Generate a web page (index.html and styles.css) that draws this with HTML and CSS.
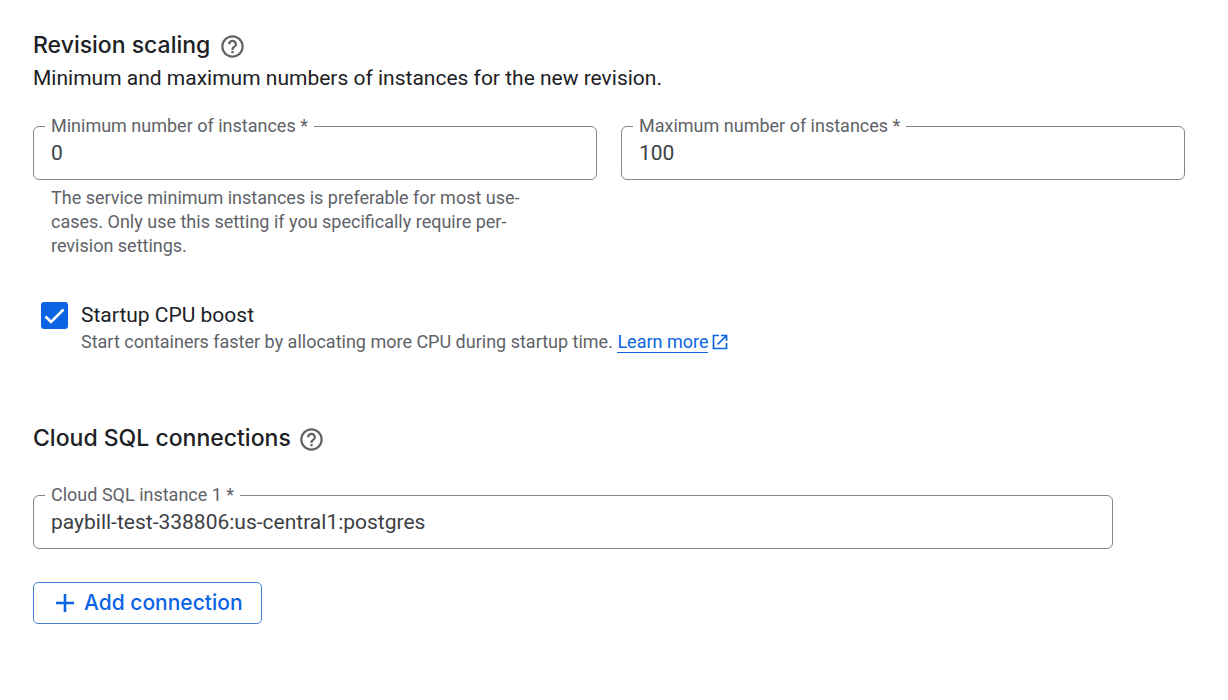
FILE: index.html
```html
<!DOCTYPE html>
<html lang="en">
<head>
<meta charset="utf-8">
<meta name="viewport" content="width=device-width, initial-scale=1">
<title>Revision settings</title>
<link rel="stylesheet" href="styles.css">
</head>
<body>
<form class="page">
  <section class="scaling">
    <div class="heading heading-wide">
      <h2 class="title">Revision scaling</h2>
      <button class="help" type="button" aria-label="Help for revision scaling">
        <svg class="help-icon" viewBox="0 0 24 24" aria-hidden="true"><path d="M11 18h2v-2h-2v2zm1-16C6.480 2 2 6.480 2 12s4.480 10 10 10 10-4.480 10-10S17.520 2 12 2zm0 18c-4.410 0-8-3.590-8-8s3.590-8 8-8 8 3.590 8 8-3.590 8-8 8zm0-14c-2.210 0-4 1.790-4 4h2c0-1.100.9-2 2-2s2 .9 2 2c0 2-3 1.750-3 5h2c0-2.250 3-2.500 3-5 0-2.210-1.790-4-4-4z"/></svg>
      </button>
    </div>
    <p class="description">Minimum and maximum numbers of instances for the new revision.</p>
    <div class="field-row">
      <div class="field-column">
        <div class="field">
          <label class="field-label" for="min-instances">Minimum number of instances *</label>
          <input class="field-input" id="min-instances" type="text" inputmode="numeric" value="0" aria-describedby="min-hint">
        </div>
        <p class="hint" id="min-hint">The service minimum instances is preferable for most use-cases. Only use this setting if you specifically require per-revision settings.</p>
      </div>
      <div class="field-column">
        <div class="field">
          <label class="field-label" for="max-instances">Maximum number of instances *</label>
          <input class="field-input" id="max-instances" type="text" inputmode="numeric" value="100">
        </div>
      </div>
    </div>
  </section>

  <section class="boost">
    <input class="checkbox" id="cpu-boost" type="checkbox" checked aria-describedby="boost-text">
    <div class="boost-body">
      <label class="boost-label" for="cpu-boost">Startup CPU boost</label>
      <p class="boost-text" id="boost-text">Start containers faster by allocating more CPU during startup time. <a class="link" href="#learn"><span class="link-text">Learn more</span><svg class="link-icon" viewBox="0 0 16 16" aria-hidden="true"><path d="M7 1.500H1.500v13h13V9M9 1.500h5.500V7M14 2 5.500 10.500"/></svg></a></p>
    </div>
  </section>

  <section class="sql">
    <div class="heading">
      <h2 class="title">Cloud SQL connections</h2>
      <button class="help" type="button" aria-label="Help for Cloud SQL connections">
        <svg class="help-icon" viewBox="0 0 24 24" aria-hidden="true"><path d="M11 18h2v-2h-2v2zm1-16C6.480 2 2 6.480 2 12s4.480 10 10 10 10-4.480 10-10S17.520 2 12 2zm0 18c-4.410 0-8-3.590-8-8s3.590-8 8-8 8 3.590 8 8-3.590 8-8 8zm0-14c-2.210 0-4 1.790-4 4h2c0-1.100.9-2 2-2s2 .9 2 2c0 2-3 1.750-3 5h2c0-2.250 3-2.500 3-5 0-2.210-1.790-4-4-4z"/></svg>
      </button>
    </div>
    <div class="field sql-field">
      <label class="field-label" for="sql-instance">Cloud SQL instance 1 *</label>
      <input class="field-input" id="sql-instance" type="text" value="paybill-test-338806:us-central1:postgres">
    </div>
    <button class="add" type="button">
      <svg class="add-icon" viewBox="0 0 18 18" aria-hidden="true"><path d="M9 0v18M0 9h18"/></svg>
      <span>Add connection</span>
    </button>
  </section>
</form>
</body>
</html>
```
FILE: styles.css
```css
* {
  box-sizing: border-box;
}

body {
  margin: 0;
  background: #fff;
  color: #202124;
  font-family: Roboto, sans-serif;
  font-size: 21px;
  line-height: 30px;
}

h2,
p {
  margin: 0;
}

.page {
  padding: 30px 43px 30px 33px;
}

.heading {
  display: flex;
  align-items: center;
  gap: 7px;
}

.heading-wide {
  gap: 9px;
}

.title {
  font-family: Inter, sans-serif;
  font-size: 23px;
  font-weight: 500;
  line-height: 30px;
}

.help {
  display: flex;
  padding: 2px 0 0;
  border: 0;
  background: none;
}

.help-icon {
  width: 27px;
  height: 27px;
  fill: #5f6368;
}

.description {
  margin-top: 3px;
}

.field-row {
  display: grid;
  grid-template-columns: 1fr 1fr;
  gap: 24px;
  margin-top: 33px;
}

.field {
  position: relative;
}

.field-label {
  position: absolute;
  top: -12px;
  left: 12px;
  padding: 0 6px;
  background: #fff;
  color: #5f6368;
  font-size: 18px;
  line-height: 24px;
}

.field-input {
  display: block;
  width: 100%;
  height: 54px;
  padding: 0 17px;
  border: 1px solid #80868b;
  border-radius: 6px;
  background: transparent;
  color: #3c4043;
  font: inherit;
}

.hint {
  max-width: 510px;
  padding: 6px 18px 0;
  color: #5f6368;
  font-size: 18px;
  line-height: 24px;
}

.boost {
  display: flex;
  gap: 13px;
  margin-top: 42px;
  padding-left: 8px;
}

.checkbox {
  flex: none;
  width: 27px;
  height: 27px;
  margin: 2px 0 0;
  border-radius: 3px;
  appearance: none;
  background: #0b65e3;
}

.checkbox:checked {
  background-image: url("data:image/svg+xml,%3Csvg xmlns='http://www.w3.org/2000/svg' viewBox='0 0 27 27'%3E%3Cpath d='M4.500 14.500 10 20 22.500 7.500' fill='none' stroke='white' stroke-width='2.600'/%3E%3C/svg%3E");
  background-size: 27px 27px;
}

.boost-label {
  display: block;
}

.boost-text {
  color: #5f6368;
  font-size: 18px;
  line-height: 24px;
}

.link {
  color: #0b65e3;
  text-decoration: none;
}

.link-text {
  border-bottom: 1px solid #0b65e3;
}

.link-icon {
  width: 16px;
  height: 16px;
  margin-left: 4px;
  vertical-align: -2px;
  fill: none;
  stroke: #0b65e3;
  stroke-width: 1.700;
}

.sql {
  margin-top: 69px;
}

.sql-field {
  margin: 42px 72px 0 0;
}

.add {
  display: flex;
  align-items: center;
  gap: 10px;
  height: 42px;
  margin-top: 33px;
  padding: 0 18px 0 22px;
  border: 1px solid #4a7fd4;
  border-radius: 5px;
  background: #fff;
  color: #0b65e3;
  font-family: Inter, sans-serif;
  font-size: 21px;
  font-weight: 500;
  line-height: 30px;
}

.add-icon {
  width: 18px;
  height: 18px;
  fill: none;
  stroke: #0b65e3;
  stroke-width: 2.600;
}
```
